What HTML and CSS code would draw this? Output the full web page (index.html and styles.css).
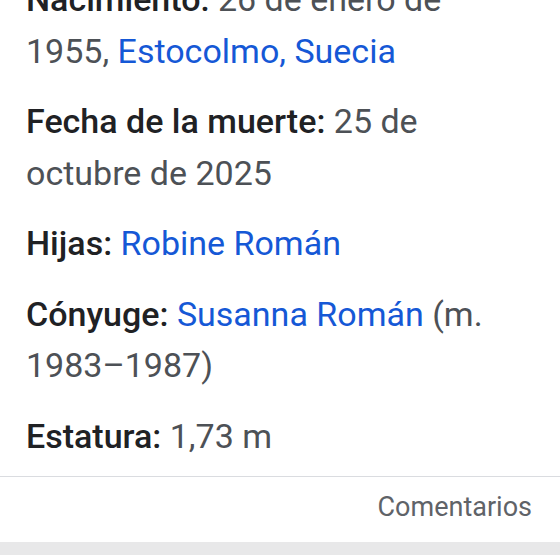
FILE: index.html
```html
<!DOCTYPE html>
<html lang="es">
<head>
<meta charset="utf-8">
<link rel="stylesheet" href="styles.css">
</head>
<body>
<div class="panel">
  <div class="facts">
    <div class="fact"><span class="label">Nacimiento:</span> <span class="value">26 de enero de 1955, <a class="link">Estocolmo, Suecia</a></span></div>
    <div class="fact"><span class="label">Fecha de la muerte:</span> <span class="value">25 de octubre de 2025</span></div>
    <div class="fact"><span class="label">Hijas:</span> <span class="value"><a class="link">Robine Román</a></span></div>
    <div class="fact"><span class="label">Cónyuge:</span> <span class="value"><a class="link">Susanna Román</a> (m. 1983–1987)</span></div>
    <div class="fact"><span class="label">Estatura:</span> <span class="value">1,73 m</span></div>
  </div>
  <div class="footer"><span class="feedback">Comentarios</span></div>
</div>
<div class="band"></div>
</body>
</html>
```
FILE: styles.css
```css
html, body {
  margin: 0;
  padding: 0;
  background: #ffffff;
  overflow: hidden;
}
body {
  font-family: Roboto, "Liberation Sans", sans-serif;
  width: 560px;
  height: 560px;
}
.panel {
  background: #fff;
}
.facts {
  margin-top: -26px;
  padding: 0 50px 14px 26px;
  display: flex;
  flex-direction: column;
  gap: 19px;
}
.fact {
  font-size: 34px;
  line-height: 51.5px;
  color: #4d5156;
}
.label {
  color: #202124;
  font-weight: 500;
}
.link {
  color: #1558d6;
  text-decoration: none;
}
.footer {
  border-top: 1px solid #dadce0;
  display: flex;
  justify-content: flex-end;
  padding: 12px 28px 0 0;
  height: 66px;
  box-sizing: border-box;
}
.feedback {
  font-size: 27px;
  line-height: 36px;
  color: #5f6368;
}
.band {
  height: 13px;
  background: #e8e8e9;
}
```
